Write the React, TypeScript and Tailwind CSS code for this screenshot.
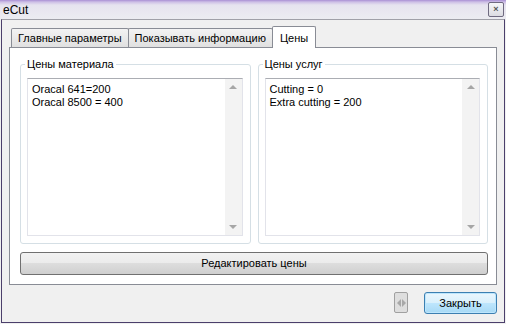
import React from 'react';

const font = { fontFamily: '"Liberation Sans", Arial, sans-serif' };

function ListBox({ lines }: { lines: string[] }) {
  return (
    <div className="flex flex-1 border border-[#e2e3ea] border-t-[#abadb3] bg-white">
      <div className="flex-1 pl-[4px] pt-[4px] text-[11px] leading-[13px] text-black">
        {lines.map((l) => (
          <div key={l}>{l}</div>
        ))}
      </div>
      <div className="flex w-[17px] flex-col justify-between bg-[#f3f3f3] py-[6px]">
        <div className="mx-auto h-0 w-0 border-x-[4px] border-b-[4px] border-x-transparent border-b-[#a6a6a6]" />
        <div className="mx-auto h-0 w-0 border-x-[4px] border-t-[4px] border-x-transparent border-t-[#a6a6a6]" />
      </div>
    </div>
  );
}

function GroupBox({ title, lines }: { title: string; lines: string[] }) {
  return (
    <div className="relative flex flex-1 rounded-[3px] border border-[#d5dfe5] pb-[7px] pl-[6px] pr-[7px] pt-[13px]">
      <span className="absolute -top-[8px] left-[4px] bg-white px-[2px] text-[11px] leading-[14px] text-black">
        {title}
      </span>
      <ListBox lines={lines} />
    </div>
  );
}

export default function App() {
  return (
    <div className="flex h-[324px] w-[506px] flex-col bg-[#f0f0f0] text-[11px]" style={font}>
      <div className="flex h-[19px] items-center justify-between bg-[linear-gradient(#a98fd4_0px,#cdbfe6_2px,#e6e3ef_5px,#ececf1)] pl-[3px] pr-[2px]">
        <span className="text-[12px] text-black">eCut</span>
        <div className="flex h-[15px] w-[16px] items-center justify-center rounded-[2px] border border-[#6f6a80] bg-[linear-gradient(#f6f6f8,#dcdce2)] text-[9px] font-bold leading-none text-[#555]">
          ×
        </div>
      </div>
      <div className="mx-[1px] mb-[1px] flex flex-1 flex-col border border-[#4b3f6b] border-t-[#a0a0a8] px-[7px] pt-[6px]">
        <div className="flex items-end pl-[2px]">
          <div className="flex h-[19px] items-center rounded-t-[2px] border border-b-0 border-[#898c95] bg-[linear-gradient(#f3f3f3,#e0e0e0)] px-[6px] text-black">
            Главные параметры
          </div>
          <div className="-ml-px flex h-[19px] items-center rounded-t-[2px] border border-b-0 border-[#898c95] bg-[linear-gradient(#f3f3f3,#e0e0e0)] px-[6px] text-black">
            Показывать информацию
          </div>
          <div className="relative z-10 -mb-px -ml-px flex h-[22px] items-start rounded-t-[2px] border border-b-0 border-[#898c95] bg-white px-[7px] pt-[3px] text-black">
            Цены
          </div>
        </div>
        <div className="flex h-[238px] flex-col border border-[#898c95] bg-white pb-[9px] pl-[10px] pr-[8px] pt-[16px]">
          <div className="flex flex-1 gap-[7px]">
            <GroupBox title="Цены материала" lines={['Oracal 641=200', 'Oracal 8500 = 400']} />
            <GroupBox title="Цены услуг" lines={['Cutting = 0', 'Extra cutting = 200']} />
          </div>
          <div className="mt-[8px] flex h-[23px] items-center justify-center rounded-[3px] border border-[#707070] bg-[linear-gradient(#f2f2f2_0%,#ebebeb_50%,#dddddd_50%,#cfcfcf_100%)] text-black">
            Редактировать цены
          </div>
        </div>
        <div className="flex justify-end pt-[7px]">
          <div className="flex h-[21px] w-[14px] items-center justify-center gap-[1px] rounded-[2px] border border-[#a0a0a0] bg-[#dedede]">
            <div className="h-0 w-0 border-y-[4px] border-r-[4px] border-y-transparent border-r-[#a8a8a8]" />
            <div className="h-0 w-0 border-y-[4px] border-l-[4px] border-y-transparent border-l-[#a8a8a8]" />
          </div>
          <div className="ml-[16px] flex h-[22px] w-[73px] items-center justify-center rounded-[3px] border border-[#3c7fb1] bg-[linear-gradient(#eaf6fd_0%,#d9f0fc_50%,#bee6fd_50%,#a7d9f5_100%)] text-black shadow-[inset_0_0_0_1px_#bde6fd]">
            Закрыть
          </div>
        </div>
      </div>
    </div>
  );
}
